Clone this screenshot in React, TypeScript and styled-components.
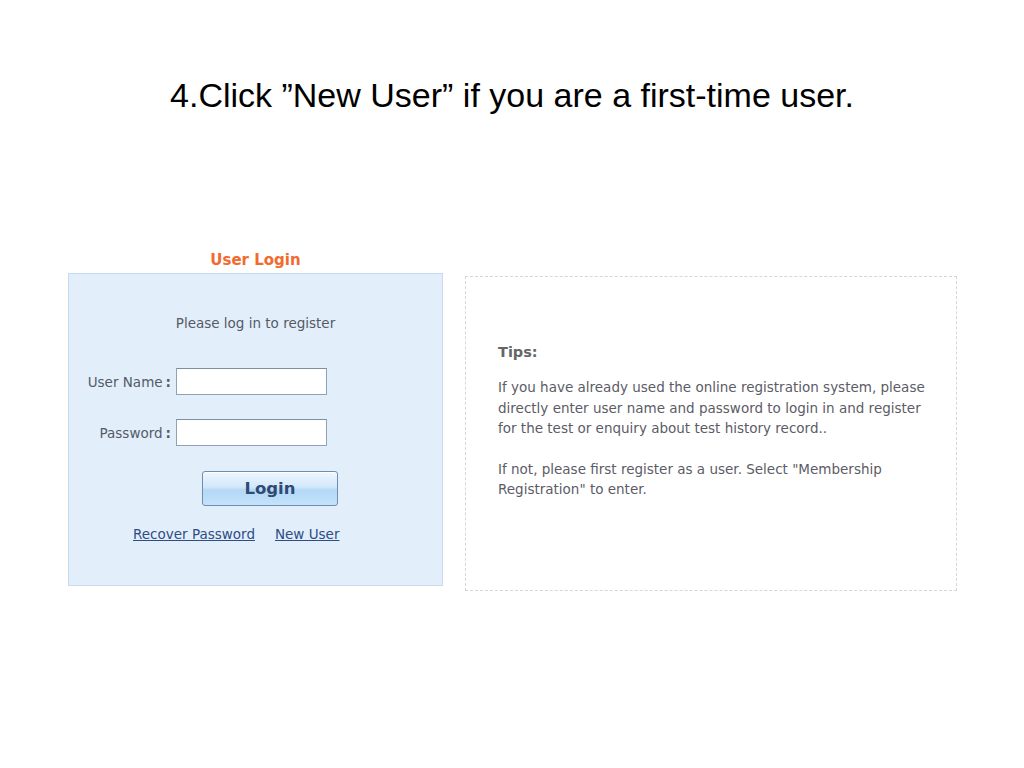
import React from "react";
import styled, { createGlobalStyle } from "styled-components";

const Global = createGlobalStyle`
  html, body { margin: 0; padding: 0; background: #ffffff; }
  body { width: 1024px; height: 768px; overflow: hidden; }
`;

const Page = styled.div`
  width: 1024px;
  height: 768px;
  display: flex;
  flex-direction: column;
  font-family: "DejaVu Sans", Tahoma, sans-serif;
`;

const Title = styled.h1`
  margin: 75px 0 0 0;
  text-align: center;
  font-family: "Liberation Sans", Arial, sans-serif;
  font-weight: normal;
  font-size: 34px;
  line-height: 40px;
  color: #000;
`;

const Row = styled.div`
  display: flex;
  align-items: flex-start;
  gap: 22px;
  margin-top: 135px;
  padding-left: 68px;
`;

const LoginColumn = styled.div`
  width: 375px;
  display: flex;
  flex-direction: column;
`;

const LoginHeading = styled.div`
  text-align: center;
  color: #f26a2e;
  font-weight: bold;
  font-size: 15px;
  line-height: 20px;
  height: 23px;
`;

const LoginBox = styled.div`
  box-sizing: border-box;
  height: 313px;
  background: #e2effb;
  border: 1px solid #c8daee;
  display: flex;
  flex-direction: column;
  align-items: stretch;
  padding-top: 39px;
  color: #555a66;
  font-size: 13.5px;
`;

const Intro = styled.div`
  text-align: center;
  line-height: 20px;
  margin-bottom: 35px;
`;

const FieldRow = styled.div`
  display: grid;
  grid-template-columns: 107px 151px;
  align-items: center;
  margin-bottom: 24px;
`;

const Label = styled.label`
  text-align: right;
  padding-right: 5px;
  white-space: nowrap;
  color: #555a66;
`;

const Colon = styled.span`
  margin-left: 3px;
  font-weight: bold;
`;

const Input = styled.input`
  box-sizing: border-box;
  width: 151px;
  height: 27px;
  border: 1px solid #8ea2b8;
  border-top-color: #7d8fa3;
  background: #fff;
  outline: none;
  padding: 2px 4px;
  font-family: inherit;
`;

const ButtonWrap = styled.div`
  padding-left: 133px;
  margin-top: 1px;
`;

const LoginButton = styled.button`
  box-sizing: border-box;
  width: 136px;
  height: 35px;
  border: 1px solid #6f8db0;
  border-radius: 3px;
  background: linear-gradient(to bottom, #eef6fe 0%, #d2e8fb 45%, #b4d8f6 55%, #c4e2fb 100%);
  box-shadow: inset 0 1px 0 #ffffff;
  color: #2f4a73;
  font-family: "DejaVu Sans", Tahoma, sans-serif;
  font-weight: bold;
  font-size: 16.5px;
  padding: 0;
`;

const Links = styled.div`
  display: flex;
  justify-content: flex-start;
  gap: 20px;
  margin-top: 18px;
  padding-left: 64px;
`;

const Link = styled.a`
  color: #2e4c86;
  text-decoration: underline;
  font-size: 13.5px;
  line-height: 20px;
  cursor: pointer;
`;

const TipsBox = styled.div`
  box-sizing: border-box;
  margin-top: 26px;
  width: 492px;
  height: 315px;
  border: 1px dashed #d6d6d6;
  padding: 65px 0 0 32px;
  color: #5c5c66;
`;

const TipsTitle = styled.div`
  font-weight: bold;
  font-size: 14.5px;
  line-height: 20px;
  color: #666;
  margin-bottom: 15px;
`;

const TipsText = styled.p`
  margin: 0 0 20px 0;
  font-size: 13.5px;
  line-height: 20.5px;
  white-space: nowrap;
`;

export default function App() {
  return (
    <Page>
      <Global />
      <Title>4.Click ”New User” if you are a first-time user.</Title>
      <Row>
        <LoginColumn>
          <LoginHeading>User Login</LoginHeading>
          <LoginBox>
            <Intro>Please log in to register</Intro>
            <FieldRow>
              <Label htmlFor="u">
                User Name<Colon>:</Colon>
              </Label>
              <Input id="u" type="text" />
            </FieldRow>
            <FieldRow>
              <Label htmlFor="p">
                Password<Colon>:</Colon>
              </Label>
              <Input id="p" type="password" />
            </FieldRow>
            <ButtonWrap>
              <LoginButton type="button">Login</LoginButton>
            </ButtonWrap>
            <Links>
              <Link>Recover Password</Link>
              <Link>New User</Link>
            </Links>
          </LoginBox>
        </LoginColumn>
        <TipsBox>
          <TipsTitle>Tips:</TipsTitle>
          <TipsText>
            If you have already used the online registration system, please
            <br />
            directly enter user name and password to login in and register
            <br />
            for the test or enquiry about test history record..
          </TipsText>
          <TipsText>
            If not, please first register as a user. Select "Membership
            <br />
            Registration" to enter.
          </TipsText>
        </TipsBox>
      </Row>
    </Page>
  );
}
